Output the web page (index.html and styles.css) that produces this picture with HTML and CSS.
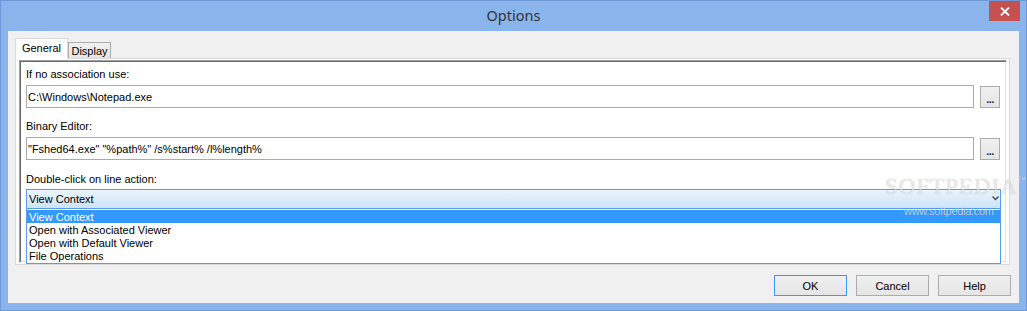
FILE: index.html
```html
<!DOCTYPE html>
<html lang="en">
<head>
    <meta charset="UTF-8">
    <title>Options</title>
    <link rel="stylesheet" href="styles.css">
</head>
<body>
    <div class="window">
        <div class="titlebar">
            <span></span>
            <span class="title">Options</span>
            <button class="close" title="Close">
                <svg width="10" height="9" viewBox="0 0 10 9">
                    <path d="M1 0.5 L9 8.5 M9 0.5 L1 8.5" stroke="#fff" stroke-width="1.8" fill="none"/>
                </svg>
            </button>
        </div>

        <div class="client">
            <div class="tabs">
                <div class="tab active">General</div>
                <div class="tab">Display</div>
            </div>

            <div class="page">
                <div class="frame">
                    <label class="caption">If no association use:</label>
                    <div class="field-row">
                        <input class="field" type="text" value="C:\Windows\Notepad.exe">
                        <button class="browse">...</button>
                    </div>

                    <label class="caption second">Binary Editor:</label>
                    <div class="field-row">
                        <input class="field" type="text" value="&quot;Fshed64.exe&quot; &quot;%path%&quot; /s%start% /l%length%">
                        <button class="browse">...</button>
                    </div>

                    <label class="caption third">Double-click on line action:</label>
                    <div class="combo-wrap">
                        <div class="combo">
                            <span>View Context</span>
                            <svg class="chevron" width="7" height="5" viewBox="0 0 7 5">
                                <path d="M0.5 0.5 L3.5 3.5 L6.5 0.5" stroke="#444" stroke-width="1.4" fill="none"/>
                            </svg>
                        </div>
                        <ul class="dropdown">
                            <li class="selected">View Context</li>
                            <li>Open with Associated Viewer</li>
                            <li>Open with Default Viewer</li>
                            <li>File Operations</li>
                        </ul>
                    </div>
                </div>
            </div>

            <div class="buttons">
                <button class="btn default">OK</button>
                <button class="btn">Cancel</button>
                <button class="btn">Help</button>
            </div>
        </div>

        <!-- watermark from the screenshot -->
        <div class="watermark">
            <div class="wm-logo">SOFTPEDIA<sup>™</sup></div>
            <div class="wm-url">www.softpedia.com</div>
        </div>
    </div>
</body>
</html>
```

FILE: styles.css
```css
* {
    box-sizing: border-box;
}
body {
    margin: 0;
    font-family: "Liberation Sans", Arial, sans-serif;
    font-size: 11px;
    color: #000;
}
.window {
    position: relative;
    width: 1027px;
    height: 311px;
    background-color: #8ab4ec;
    border: 1px solid #6f98d6;
    overflow: hidden;
}
.titlebar {
    height: 30px;
    display: grid;
    grid-template-columns: 1fr auto 1fr;
}
.title {
    font-family: "Noto Sans", "Open Sans", sans-serif;
    font-size: 14.5px;
    line-height: 29px;
    color: #333;
}
.close {
    justify-self: end;
    align-self: start;
    width: 31px;
    height: 20px;
    margin-right: 6px;
    border: none;
    padding: 0;
    background-color: #c75050;
    display: flex;
    align-items: center;
    justify-content: center;
}
.client {
    margin: 0 7px;
    height: 272px;
    background-color: #f0f0f0;
    padding: 7px 0 0 7px;
}
.tabs {
    display: flex;
    align-items: flex-end;
    height: 20px;
}
.tab {
    width: 43px;
    height: 16px;
    padding: 0;
    line-height: 16px;
    border: 1px solid #acacac;
    border-bottom: none;
    background: linear-gradient(#f0f0f0, #e5e5e5);
    text-align: center;
}
.tab.active {
    position: relative;
    z-index: 1;
    width: 53px;
    height: 21px;
    line-height: 18px;
    margin-bottom: -1px;
    background: #fff;
    border-color: #d9d9d9;
}
.page {
    width: 995px;
    height: 207px;
    background: #fff;
    border: 1px solid #d9d9d9;
    padding: 1px 2px 1px 3px;
}
.frame {
    height: 203px;
    border-top: 1px solid #a0a0a0;
    border-left: 1px solid #a0a0a0;
    border-right: 1px solid #fff;
    border-bottom: 1px solid #fff;
    box-shadow: inset 1px 1px 0 #696969, inset -1px -1px 0 #e3e3e3;
    padding: 7px 5px 0 6px;
}
.caption {
    display: block;
    height: 13px;
    line-height: 13px;
    margin-bottom: 4px;
}
.caption.second {
    margin-top: 12px;
}
.caption.third {
    margin-top: 13px;
    margin-bottom: 3px;
}
.field-row {
    display: flex;
    align-items: center;
    height: 23px;
}
.field {
    width: 948px;
    height: 23px;
    margin: 0 6px 0 0;
    padding: 0 1px;
    border: 1px solid #ababab;
    font-family: "Liberation Sans", Arial, sans-serif;
    font-size: 11px;
    color: #000;
    background: #fff;
    outline: none;
}
.browse {
    width: 20px;
    height: 22px;
    margin-top: 1px;
    padding: 3px 0 0;
    border: 1px solid #acacac;
    background: linear-gradient(#f0f0f0, #e5e5e5);
    font-family: "Liberation Sans", Arial, sans-serif;
    font-size: 11px;
    font-weight: bold;
    color: #1a2a50;
    letter-spacing: -0.5px;
}
.combo-wrap {
    position: relative;
    width: 975px;
}
.combo {
    height: 20px;
    border: 1px solid #569de5;
    background: linear-gradient(#ebf4fc, #cde4f7);
    display: flex;
    align-items: center;
    justify-content: space-between;
    padding: 0 1px 0 2px;
}
.chevron {
    margin-bottom: 1px;
}
.dropdown {
    position: absolute;
    top: 20px;
    left: 0;
    right: 0;
    z-index: 2;
    margin: 0;
    padding: 1px 0 1px;
    list-style: none;
    background: #fff;
    border: 1px solid #569de5;
    border-top: none;
}
.dropdown li {
    height: 13px;
    line-height: 14px;
    padding-left: 2px;
}
.dropdown li.selected {
    background-color: #3399ff;
    color: #fff;
}
.buttons {
    display: flex;
    justify-content: flex-end;
    gap: 9px;
    margin-top: 10px;
    padding-right: 8px;
}
.btn {
    width: 73px;
    height: 21px;
    padding: 0;
    border: 1px solid #acacac;
    background: linear-gradient(#f0f0f0, #e5e5e5);
    font-family: "Liberation Sans", Arial, sans-serif;
    font-size: 11px;
    color: #000;
}
.btn.default {
    border-color: #3399ff;
}
.watermark {
    position: absolute;
    left: 884px;
    top: 174px;
    z-index: 3;
    pointer-events: none;
    color: rgba(255, 255, 255, 0.7);
    text-shadow: 0 0 1px rgba(0, 0, 0, 0.3);
}
.wm-logo {
    font-family: "Liberation Serif", serif;
    font-size: 23px;
    letter-spacing: 1px;
    line-height: 24px;
}
.wm-logo sup {
    font-size: 8px;
    vertical-align: top;
    line-height: 10px;
}
.wm-url {
    font-family: "Liberation Sans", Arial, sans-serif;
    font-size: 11px;
    margin: 6px 0 0 19px;
    letter-spacing: -0.3px;
}
```
